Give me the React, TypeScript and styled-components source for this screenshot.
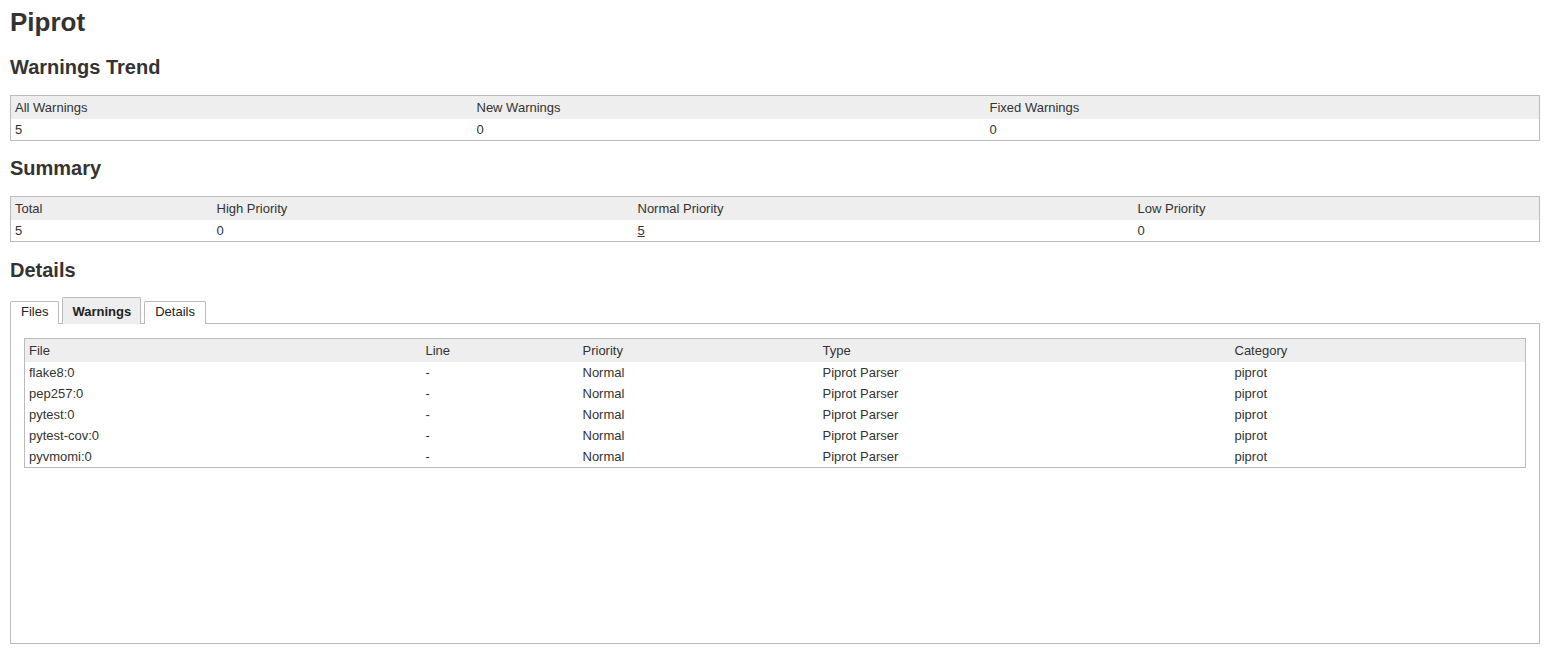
import React from "react";
import styled, { createGlobalStyle } from "styled-components";

const GlobalStyle = createGlobalStyle`
  * {
    box-sizing: border-box;
  }
  body {
    margin: 0;
    background: #fff;
    color: #333;
    font-family: "Liberation Sans", Arial, sans-serif;
    font-size: 13px;
  }
`;

const Page = styled.div`
  padding: 0 8px 0 10px;
`;

const Title = styled.h1`
  margin: 7px 0 0;
  font-size: 26px;
  line-height: 30px;
  font-weight: bold;
  color: #333;
`;

const Heading = styled.h2<{ $before?: number; $after?: number }>`
  margin: ${(p) => p.$before ?? 17}px 0 ${(p) => p.$after ?? 15}px;
  font-size: 20px;
  line-height: 23px;
  font-weight: bold;
  color: #333;
`;

const Table = styled.table`
  width: 100%;
  border-collapse: collapse;
  table-layout: fixed;
  border: 1px solid #bbb;
  font-size: 13px;
`;

const Th = styled.th<{ $w?: number }>`
  width: ${(p) => (p.$w ? `${p.$w}px` : "auto")};
  background: #eee;
  text-align: left;
  font-weight: normal;
  padding: 3px 4px;
  line-height: 17px;
  white-space: nowrap;
`;

const Td = styled.td`
  padding: 2px 4px;
  line-height: 17px;
  white-space: nowrap;
`;

const CountLink = styled.a`
  color: #333;
  text-decoration: underline;
`;

const TabBar = styled.div`
  display: flex;
  align-items: flex-end;
  gap: 3px;
  height: 27px;
  margin-bottom: -1px;
`;

const Tab = styled.div<{ $active?: boolean }>`
  border: 1px solid #bbb;
  border-bottom: none;
  border-radius: 2px 2px 0 0;
  padding: ${(p) => (p.$active ? "5px 9px 4px" : "1px 10px 4px")};
  line-height: 17px;
  font-size: 13px;
  background: ${(p) => (p.$active ? "#eee" : "#fff")};
  font-weight: ${(p) => (p.$active ? "bold" : "normal")};
  color: #222;
  position: relative;
  z-index: 1;
`;

const Panel = styled.div`
  border: 1px solid #bbb;
  height: 321px;
  padding: 14px 13px;
`;

const trend = { all: 5, fresh: 0, fixed: 0 };

const warnings = [
  { file: "flake8:0", line: "-", priority: "Normal", type: "Piprot Parser", category: "piprot" },
  { file: "pep257:0", line: "-", priority: "Normal", type: "Piprot Parser", category: "piprot" },
  { file: "pytest:0", line: "-", priority: "Normal", type: "Piprot Parser", category: "piprot" },
  { file: "pytest-cov:0", line: "-", priority: "Normal", type: "Piprot Parser", category: "piprot" },
  { file: "pyvmomi:0", line: "-", priority: "Normal", type: "Piprot Parser", category: "piprot" },
];

export default function App() {
  return (
    <Page>
      <GlobalStyle />
      <Title>Piprot</Title>

      <Heading $before={19} $after={16}>Warnings Trend</Heading>
      <Table>
        <thead>
          <tr>
            <Th $w={462}>All Warnings</Th>
            <Th $w={513}>New Warnings</Th>
            <Th>Fixed Warnings</Th>
          </tr>
        </thead>
        <tbody>
          <tr>
            <Td>{trend.all}</Td>
            <Td>{trend.fresh}</Td>
            <Td>{trend.fixed}</Td>
          </tr>
        </tbody>
      </Table>

      <Heading $before={16} $after={16}>Summary</Heading>
      <Table>
        <thead>
          <tr>
            <Th $w={202}>Total</Th>
            <Th $w={421}>High Priority</Th>
            <Th $w={500}>Normal Priority</Th>
            <Th>Low Priority</Th>
          </tr>
        </thead>
        <tbody>
          <tr>
            <Td>5</Td>
            <Td>0</Td>
            <Td>
              <CountLink href="#">5</CountLink>
            </Td>
            <Td>0</Td>
          </tr>
        </tbody>
      </Table>

      <Heading>Details</Heading>
      <TabBar>
        <Tab>Files</Tab>
        <Tab $active>Warnings</Tab>
        <Tab>Details</Tab>
      </TabBar>
      <Panel>
        <Table>
          <thead>
            <tr>
              <Th $w={397}>File</Th>
              <Th $w={157}>Line</Th>
              <Th $w={240}>Priority</Th>
              <Th $w={412}>Type</Th>
              <Th>Category</Th>
            </tr>
          </thead>
          <tbody>
            {warnings.map((w) => (
              <tr key={w.file}>
                <Td>{w.file}</Td>
                <Td>{w.line}</Td>
                <Td>{w.priority}</Td>
                <Td>{w.type}</Td>
                <Td>{w.category}</Td>
              </tr>
            ))}
          </tbody>
        </Table>
      </Panel>
    </Page>
  );
}
